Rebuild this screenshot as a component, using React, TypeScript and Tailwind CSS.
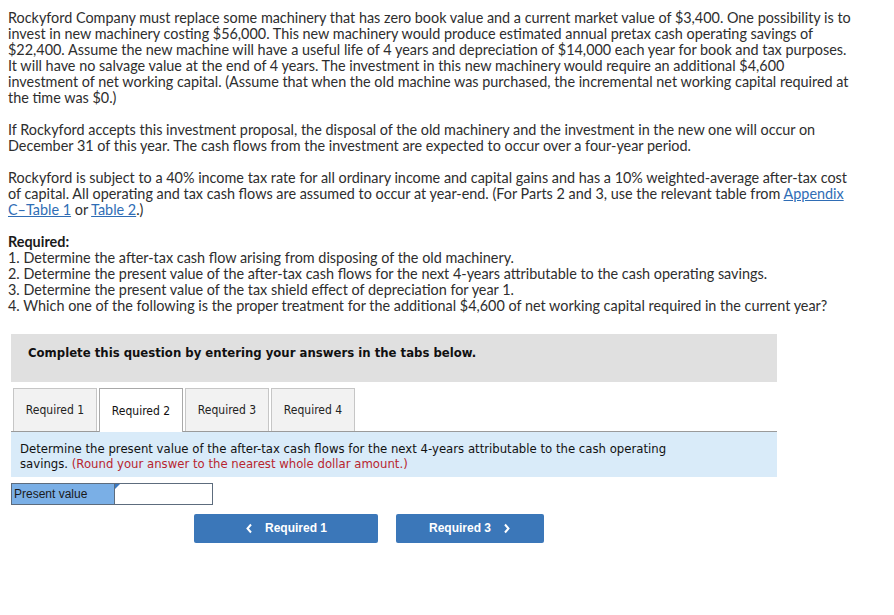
import React from "react";

const body = { fontFamily: "Lato, 'Open Sans', sans-serif" };
const verd = { fontFamily: "'DejaVu Sans Condensed', 'DejaVu Sans', Verdana, sans-serif" };
const arial = { fontFamily: "'Liberation Sans', Arial, sans-serif" };

function Tab({ label, active }: { label: string; active?: boolean }) {
  return (
    <div
      className={
        active
          ? "w-[84px] h-[44px] flex items-center justify-center bg-white border border-[#a9a9a9] border-b-0 -mb-px relative z-10 text-[12px] text-[#111]"
          : "w-[84px] h-[43px] flex items-center justify-center bg-[#f2f2f2] border border-[#c6c6c6] border-b-0 text-[12px] text-[#222]"
      }
      style={verd}
    >
      {label}
    </div>
  );
}

export default function App() {
  return (
    <div className="bg-white w-[894px] h-[615px] text-[#2e2e2e] pt-[10px] px-[8px]">
      <div className="text-[14.4px] leading-[16px]" style={body}>
        <p>
          Rockyford Company must replace some machinery that has zero book value and a current market value of $3,400. One possibility is to
          <br />
          invest in new machinery costing $56,000. This new machinery would produce estimated annual pretax cash operating savings of
          <br />
          $22,400. Assume the new machine will have a useful life of 4 years and depreciation of $14,000 each year for book and tax purposes.
          <br />
          It will have no salvage value at the end of 4 years. The investment in this new machinery would require an additional $4,600
          <br />
          investment of net working capital. (Assume that when the old machine was purchased, the incremental net working capital required at
          <br />
          the time was $0.)
        </p>
        <p className="mt-[16px]">
          If Rockyford accepts this investment proposal, the disposal of the old machinery and the investment in the new one will occur on
          <br />
          December 31 of this year. The cash flows from the investment are expected to occur over a four-year period.
        </p>
        <p className="mt-[16px]">
          Rockyford is subject to a 40% income tax rate for all ordinary income and capital gains and has a 10% weighted-average after-tax cost
          <br />
          of capital. All operating and tax cash flows are assumed to occur at year-end. (For Parts 2 and 3, use the relevant table from{" "}
          <span className="text-[#2f6db5] underline">Appendix</span>
          <br />
          <span className="text-[#2f6db5] underline">C–Table 1</span> or{" "}
          <span className="text-[#2f6db5] underline">Table 2</span>.)
        </p>
        <p className="mt-[16px] font-bold text-[#1a1a1a]">Required:</p>
        <p>
          1. Determine the after-tax cash flow arising from disposing of the old machinery.
          <br />
          2. Determine the present value of the after-tax cash flows for the next 4-years attributable to the cash operating savings.
          <br />
          3. Determine the present value of the tax shield effect of depreciation for year 1.
          <br />
          4. Which one of the following is the proper treatment for the additional $4,600 of net working capital required in the current year?
        </p>
      </div>

      <div className="ml-[3px] w-[766px] mt-[20px]">
        <div
          className="h-[48px] bg-[#e0e0e0] pl-[17px] pt-[11px] text-[13px] leading-[16px] font-bold text-[#111]"
          style={verd}
        >
          Complete this question by entering your answers in the tabs below.
        </div>

        <div className="mt-[6px] flex items-end gap-[2px] pl-[2px]">
          <Tab label="Required 1" />
          <Tab label="Required 2" active />
          <Tab label="Required 3" />
          <Tab label="Required 4" />
        </div>
        <div className="border-t border-[#9a9a9a] bg-[#d9ebf9] h-[46px] pl-[9px] pt-[9px] text-[13px] leading-[15px] text-[#111]" style={verd}>
          Determine the present value of the after-tax cash flows for the next 4-years attributable to the cash operating
          <br />
          savings. <span className="text-[#b8252f]">(Round your answer to the nearest whole dollar amount.)</span>
        </div>

        <div className="mt-[6px] flex h-[22px]">
          <div
            className="w-[104px] bg-[#7aafe6] border border-[#5d6c7d] flex items-center pl-[2px] text-[12px] text-[#1a1a1a]"
            style={arial}
          >
            Present value
          </div>
          <div className="relative w-[98px] bg-white border border-[#5d6c7d] border-l-0 ">
            <div className="absolute left-0 top-0 w-0 h-0 border-t-[5px] border-t-[#3a78c0] border-r-[5px] border-r-transparent" />
          </div>
        </div>

        <div className="mt-[9px] flex gap-[18px] pl-[183px]">
          <button
            className="w-[184px] h-[29px] rounded-[2px] bg-[#3b77b9] text-white text-[12px] font-bold flex items-center justify-center gap-[12px] pb-[1px]"
            style={arial}
          >
            <svg width="8" height="11" viewBox="0 0 8 11">
              <path d="M6 1.5 L2.5 5.5 L6 9.5" stroke="white" strokeWidth="2" fill="none" />
            </svg>
            Required 1
          </button>
          <button
            className="w-[148px] h-[29px] rounded-[2px] bg-[#3b77b9] text-white text-[12px] font-bold flex items-center justify-center gap-[12px] pb-[1px]"
            style={arial}
          >
            Required 3
            <svg width="8" height="11" viewBox="0 0 8 11">
              <path d="M2 1.5 L5.5 5.5 L2 9.5" stroke="white" strokeWidth="2" fill="none" />
            </svg>
          </button>
        </div>
      </div>
    </div>
  );
}
